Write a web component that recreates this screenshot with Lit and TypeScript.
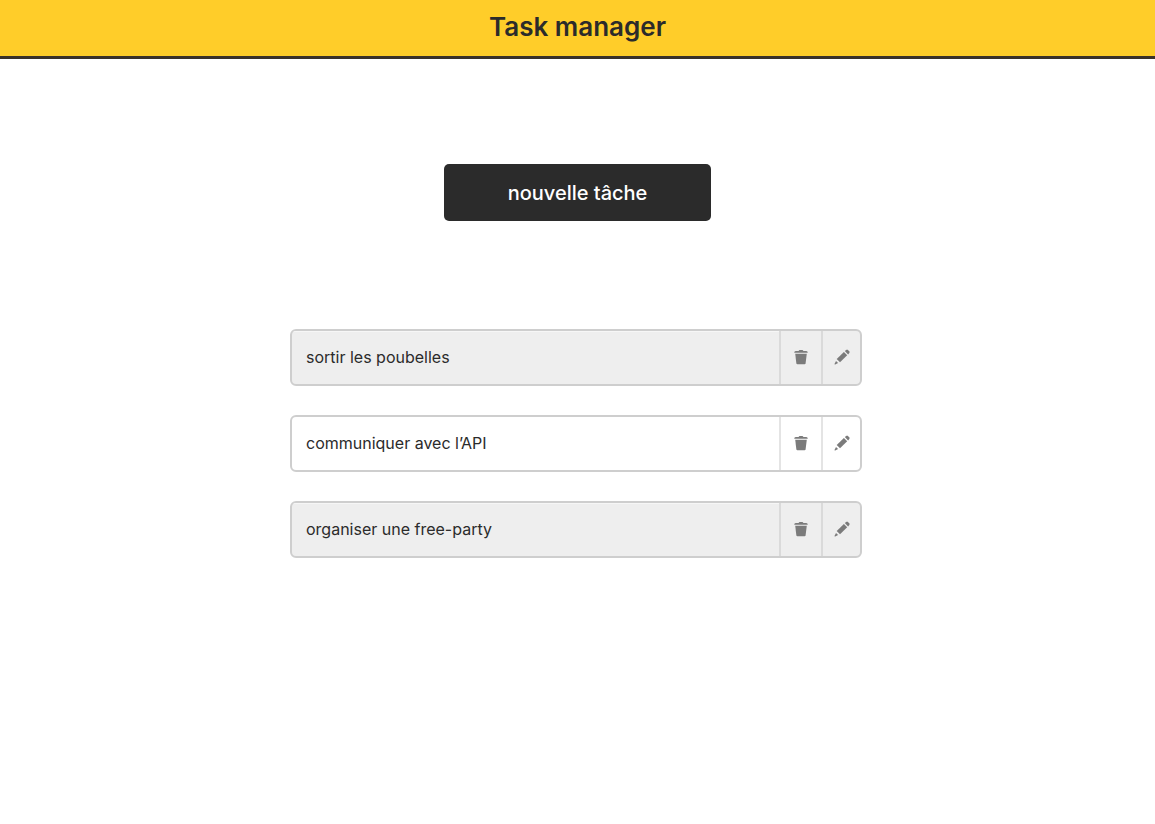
import { LitElement, html, css, svg } from "lit";
import { customElement, property, state } from "lit/decorators.js";
import { classMap } from "lit/directives/class-map.js";

interface Task {
  id: number;
  label: string;
  muted: boolean;
}

const trashIcon = svg`
  <path d="M2.2 4.8H13.8L12.6 14.4Q12.4 15.2 11.6 15.2H4.4Q3.6 15.2 3.4 14.4Z" />
  <path d="M1.2 3.7Q1.2 2.3 2.8 2H5.6Q5.9 0.9 6.8 0.9H9.2Q10.1 0.9 10.4 2H13.2Q14.8 2.3 14.8 3.7Z" />
`;

const pencilIcon = svg`
  <path d="M9.9 2.9L13.2 6.2L6 13.3L2.7 10Z" />
  <path d="M10.8 2.1L12.2 0.9Q13.1 0.2 13.9 0.9L15.3 2.3Q16 3.1 15.3 4L14.1 5.4Z" />
  <path d="M2 12.1L4.1 14.1L1.2 15.4Q0.3 15.7 0.6 14.8Z" />
`;

@customElement("task-row")
export class TaskRow extends LitElement {
  @property() label = "";
  @property({ type: Boolean }) muted = false;

  static styles = css`
    :host {
      display: block;
    }
    .row {
      --divider: #e4e4e4;
      display: grid;
      grid-template-columns: 1fr 42px 39px;
      box-sizing: border-box;
      min-height: 57px;
      border: 2px solid #cecece;
      border-radius: 6px;
      background: #ffffff;
      overflow: hidden;
    }
    .muted {
      --divider: #dadada;
      background: #eeeeee;
    }
    .label {
      display: flex;
      align-items: center;
      padding: 0 14px 2px;
      font-size: 16px;
      line-height: 24px;
      color: #2b2b2b;
    }
    .muted .label {
      box-shadow: inset 0 1px #f6f6f6;
    }
    .action {
      display: flex;
      align-items: center;
      justify-content: center;
      margin: 0;
      padding: 0 0 2px;
      border: 0;
      border-left: 2px solid var(--divider);
      background: none;
      color: #7b7b7b;
      cursor: pointer;
    }
    .icon {
      flex: none;
      width: 16px;
      height: 16px;
      fill: currentColor;
    }
  `;

  private emit(name: string) {
    this.dispatchEvent(new CustomEvent(name));
  }

  render() {
    return html`
      <div class=${classMap({ row: true, muted: this.muted })}>
        <span class="label">${this.label}</span>
        <button class="action" type="button" aria-label="supprimer" @click=${() => this.emit("remove")}>
          <svg class="icon" viewBox="0 0 16 16" aria-hidden="true">${trashIcon}</svg>
        </button>
        <button class="action" type="button" aria-label="modifier" @click=${() => this.emit("edit")}>
          <svg class="icon" viewBox="0 0 16 16" aria-hidden="true">${pencilIcon}</svg>
        </button>
      </div>
    `;
  }
}

@customElement("app-root")
export class AppRoot extends LitElement {
  @state() private tasks: Task[] = [
    { id: 1, label: "sortir les poubelles", muted: true },
    { id: 2, label: "communiquer avec l’API", muted: false },
    { id: 3, label: "organiser une free-party", muted: true },
  ];

  static styles = css`
    :host {
      display: block;
      min-height: 100vh;
      background: #ffffff;
      color: #2b2b2b;
      font-family: Inter, "Liberation Sans", sans-serif;
    }
    .header {
      padding: 10px 16px 13px;
      border-bottom: 3px solid #3a3128;
      background: #ffcd29;
      text-align: center;
    }
    .title {
      margin: 0;
      font-size: 26px;
      font-weight: 600;
      line-height: 33px;
    }
    .content {
      display: flex;
      flex-direction: column;
      align-items: center;
      gap: 108px;
      padding: 105px 16px 48px;
    }
    .create {
      min-height: 57px;
      padding: 0 64px;
      border: 0;
      border-radius: 5px;
      background: #2b2b2b;
      color: #ffffff;
      font: 500 20px/28px Inter, "Liberation Sans", sans-serif;
      cursor: pointer;
    }
    .tasks {
      display: grid;
      gap: 29px;
      width: 100%;
      max-width: 572px;
      margin: 0;
      padding: 0 3px 0 0;
      list-style: none;
    }
  `;

  private addTask() {
    const id = Math.max(0, ...this.tasks.map((t) => t.id)) + 1;
    this.tasks = [...this.tasks, { id, label: "nouvelle tâche", muted: id % 2 === 1 }];
  }

  private removeTask(id: number) {
    this.tasks = this.tasks.filter((t) => t.id !== id);
  }

  render() {
    return html`
      <header class="header"><h1 class="title">Task manager</h1></header>
      <main class="content">
        <button class="create" type="button" @click=${this.addTask}>nouvelle tâche</button>
        <ul class="tasks">
          ${this.tasks.map(
            (t) => html`<li>
              <task-row .label=${t.label} .muted=${t.muted} @remove=${() => this.removeTask(t.id)}></task-row>
            </li>`
          )}
        </ul>
      </main>
    `;
  }
}
